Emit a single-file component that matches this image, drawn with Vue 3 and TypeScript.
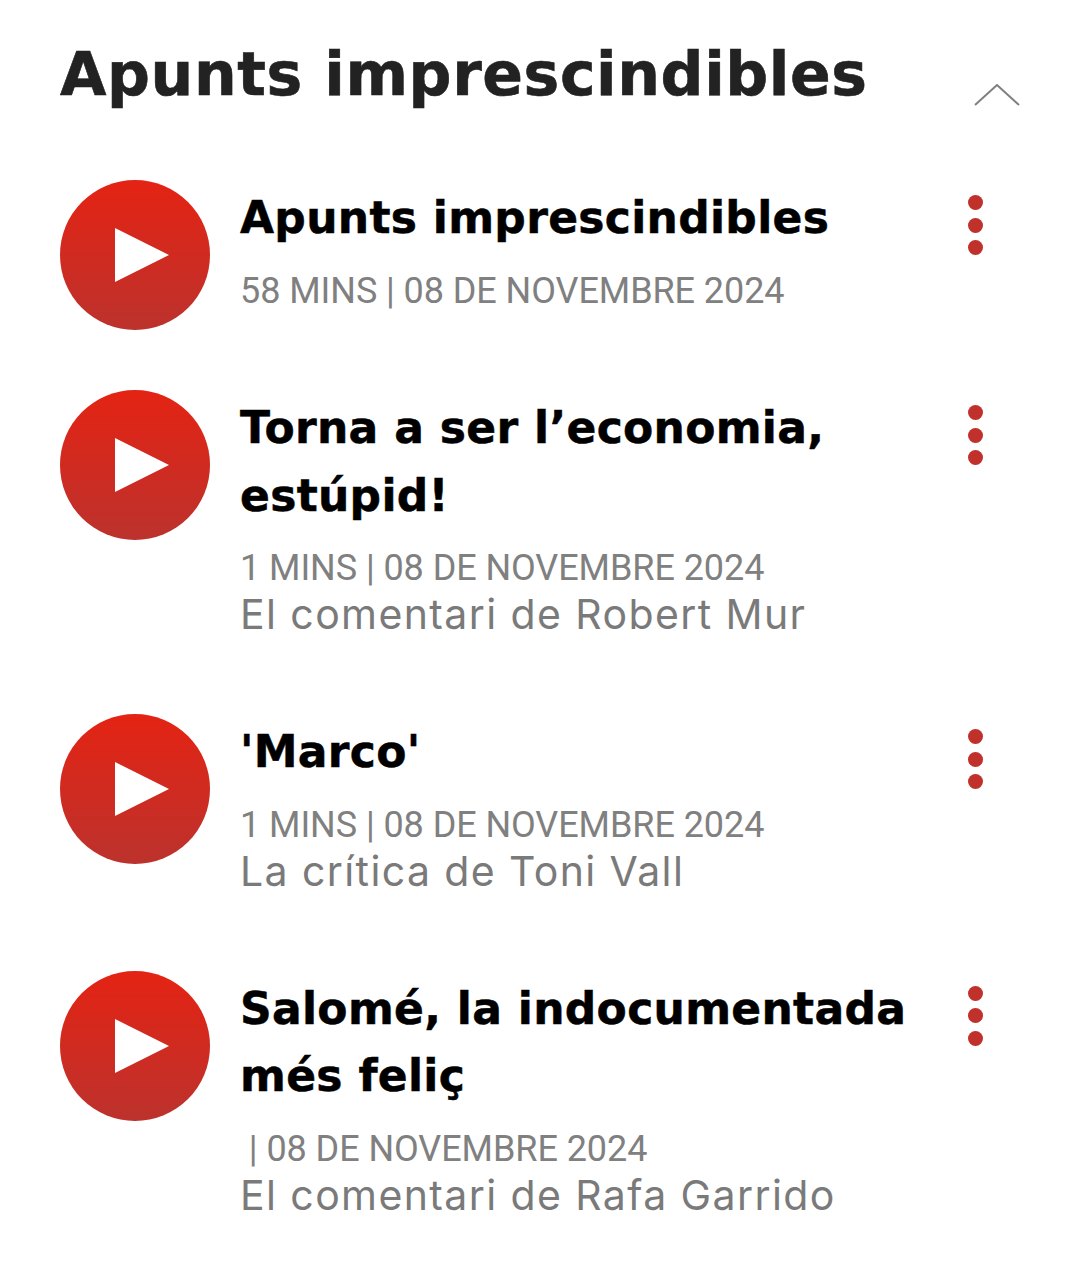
<template>
  <div class="page">
    <div class="section-head">
      <h2 class="section-title">Apunts imprescindibles</h2>
      <svg class="chevron" width="46" height="22" viewBox="0 0 46 22">
        <path d="M1 21 L23 1 L45 21" fill="none" stroke="#808080" stroke-width="2" />
      </svg>
    </div>

    <div v-for="item in items" :key="item.title" class="row">
      <div class="play">
        <svg width="54" height="54" viewBox="0 0 54 54">
          <polygon points="0,0 54,27 0,54" fill="#fff" />
        </svg>
      </div>
      <div class="body">
        <div class="title">{{ item.title }}</div>
        <div class="meta">{{ item.meta }}</div>
        <div v-if="item.sub" class="sub">{{ item.sub }}</div>
      </div>
      <div class="dots">
        <span class="dot"></span>
        <span class="dot"></span>
        <span class="dot"></span>
      </div>
    </div>
  </div>
</template>

<script setup lang="ts">
interface Item {
  title: string
  meta: string
  sub?: string
}

const items: Item[] = [
  { title: 'Apunts imprescindibles', meta: '58 MINS | 08 DE NOVEMBRE 2024' },
  {
    title: 'Torna a ser l’economia, estúpid!',
    meta: '1 MINS | 08 DE NOVEMBRE 2024',
    sub: 'El comentari de Robert Mur'
  },
  {
    title: "'Marco'",
    meta: '1 MINS | 08 DE NOVEMBRE 2024',
    sub: 'La crítica de Toni Vall'
  },
  {
    title: 'Salomé, la indocumentada més feliç',
    meta: '\u00a0| 08 DE NOVEMBRE 2024',
    sub: 'El comentari de Rafa Garrido'
  }
]
</script>

<style>
html,
body {
  background: #fff;
}
</style>

<style scoped>
.page {
  width: 1080px;
  height: 1263px;
  overflow: hidden;
  box-sizing: border-box;
  padding: 32px 60px 0;
  font-family: 'Liberation Sans', sans-serif;
}
.section-head {
  display: flex;
  justify-content: space-between;
  height: 148px;
}
.section-title {
  margin: 0;
  font-family: 'DejaVu Sans', sans-serif;
  font-size: 60px;
  line-height: 84px;
  font-weight: 700;
  letter-spacing: 0.6px;
  -webkit-text-stroke: 0.6px #222;
  color: #222;
}
.chevron {
  margin: 52px 0 0 0;
}
.row {
  display: flex;
  margin-bottom: 60px;
}
.play {
  flex: none;
  width: 150px;
  height: 150px;
  border-radius: 50%;
  background: linear-gradient(180deg, #e42313, #bc322d);
  display: flex;
  align-items: center;
  justify-content: center;
  padding-left: 13px;
  box-sizing: border-box;
}
.body {
  flex: 1;
  margin-left: 30px;
  padding: 4px 0 16px;
  min-width: 0;
}
.title {
  font-family: 'DejaVu Sans', sans-serif;
  font-weight: 700;
  font-size: 44px;
  line-height: 67.5px;
  letter-spacing: 0.3px;
  -webkit-text-stroke: 0.5px #000;
  color: #000;
  margin-bottom: 15px;
}
.meta {
  font-family: Roboto, sans-serif;
  font-size: 36px;
  line-height: 46px;
  letter-spacing: -0.07px;
  color: #808080;
  padding-top: 1px;
}
.sub {
  font-family: Inter, sans-serif;
  font-size: 41px;
  line-height: 47px;
  letter-spacing: 1.4px;
  color: #7a7a7a;
}
.dots {
  flex: none;
  width: 44px;
  display: flex;
  flex-direction: column;
  align-items: center;
  gap: 7.5px;
  padding-top: 15px;
  box-sizing: border-box;
  margin-right: 23px;
}
.dot {
  width: 15px;
  height: 15px;
  border-radius: 50%;
  background: #c0312c;
}
</style>
